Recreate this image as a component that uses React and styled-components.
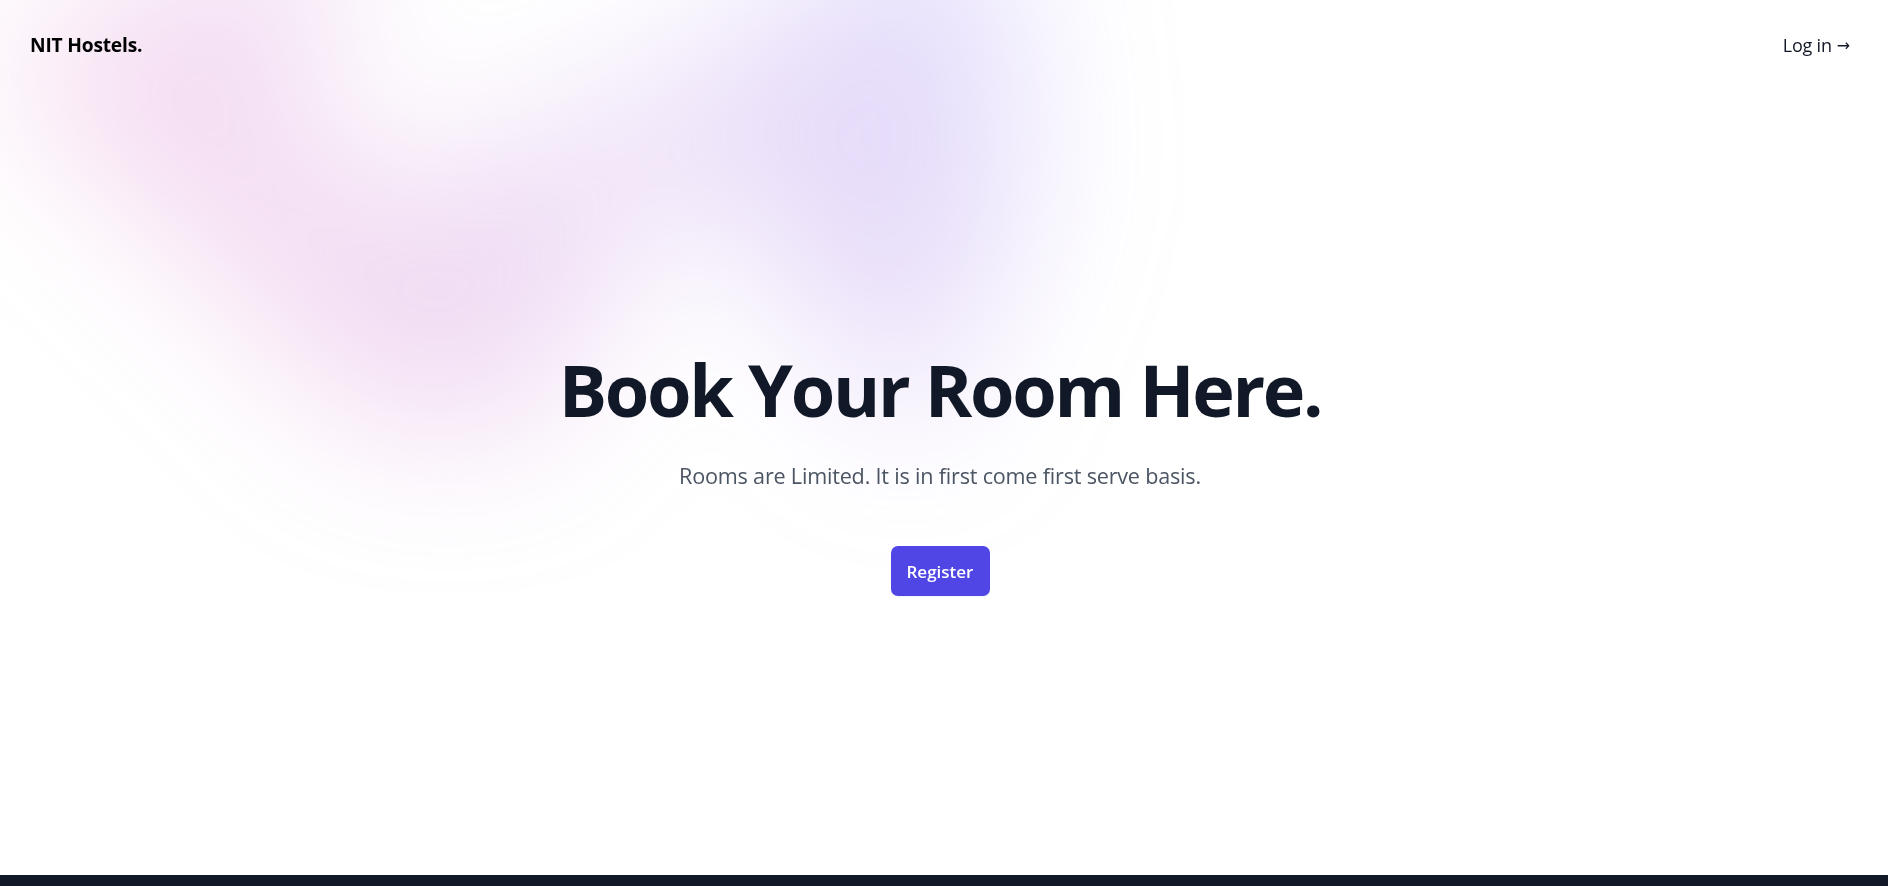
import React from 'react';
import styled, { createGlobalStyle } from 'styled-components';

const GlobalStyle = createGlobalStyle`
  * { box-sizing: border-box; }
  html, body { margin: 0; padding: 0; background: #ffffff; }
  body {
    font-family: "Open Sans", "Noto Sans", sans-serif;
    color: #111827;
    -webkit-font-smoothing: antialiased;
  }
`;

const Page = styled.div`
  position: relative;
  isolation: isolate;
  overflow: hidden;
  display: flex;
  flex-direction: column;
  min-height: 875px;
`;

const Glow = styled.div`
  position: absolute;
  left: 0;
  right: 0;
  top: -384px;
  z-index: -1;
  overflow: hidden;
  filter: blur(77px);
  transform: translateZ(0);
  pointer-events: none;
`;

const GlowShape = styled.div`
  position: relative;
  left: calc(50% - 580px);
  width: 1386px;
  aspect-ratio: 1155 / 678;
  transform: translateX(-50%) rotate(30deg);
  background: linear-gradient(to top right, #ff80b5, #9089fc);
  opacity: 0.3;
  clip-path: polygon(
    74.1% 44.1%, 100% 61.6%, 97.5% 26.9%, 85.5% 0.1%, 80.7% 2%,
    72.5% 32.5%, 60.2% 62.4%, 52.4% 68.1%, 47.5% 58.3%, 45.2% 34.5%,
    27.5% 76.7%, 0.1% 64.9%, 17.9% 100%, 27.6% 76.8%, 76.1% 97.7%,
    74.1% 44.1%
  );
`;

const Header = styled.header`
  display: flex;
  align-items: center;
  justify-content: space-between;
  padding: 31px 38px 28px 30px;
`;

const Logo = styled.a`
  font-size: 19.2px;
  line-height: 28.8px;
  font-weight: 700;
  color: #000000;
  text-decoration: none;
  letter-spacing: -0.2px;
`;

const LoginLink = styled.a`
  display: inline-flex;
  align-items: center;
  gap: 5px;
  font-size: 18px;
  line-height: 28.8px;
  font-weight: 500;
  color: #111827;
  text-decoration: none;
  letter-spacing: -0.2px;
`;

const Arrow = styled.span`
  font-family: "DejaVu Sans", sans-serif;
  font-size: 16px;
  line-height: 1;
  position: relative;
  top: 1px;
`;

const Hero = styled.main`
  flex: 1;
  display: flex;
  flex-direction: column;
  align-items: center;
  text-align: center;
  padding: 265px 32px 0 24px;
`;

const Title = styled.h1`
  margin: 0;
  font-size: 72px;
  line-height: 1;
  font-weight: 700;
  letter-spacing: -2.3px;
  color: #111827;
`;

const Lead = styled.p`
  margin: 32px 0 0;
  font-size: 21.6px;
  line-height: 38.4px;
  letter-spacing: -0.2px;
  color: #4b5563;
`;

const Actions = styled.div`
  margin-top: 51px;
  display: flex;
  justify-content: center;
`;

const PrimaryButton = styled.a`
  display: inline-flex;
  align-items: center;
  justify-content: center;
  width: 99px;
  height: 50px;
  border-radius: 7px;
  background: #4f46e5;
  color: #ffffff;
  font-size: 17px;
  font-weight: 600;
  text-decoration: none;
  box-shadow: 0 1px 2px rgba(0, 0, 0, 0.05);
`;

const Footer = styled.footer`
  height: 11px;
  background: #111827;
`;

export default function App() {
  return (
    <>
      <GlobalStyle />
      <Page>
        <Glow aria-hidden="true">
          <GlowShape />
        </Glow>
        <Header>
          <Logo href="#">NIT Hostels.</Logo>
          <LoginLink href="#">Log in <Arrow aria-hidden="true">→</Arrow></LoginLink>
        </Header>
        <Hero>
          <Title>Book Your Room Here.</Title>
          <Lead>Rooms are Limited. It is in first come first serve basis.</Lead>
          <Actions>
            <PrimaryButton href="#">Register</PrimaryButton>
          </Actions>
        </Hero>
      </Page>
      <Footer />
    </>
  );
}
